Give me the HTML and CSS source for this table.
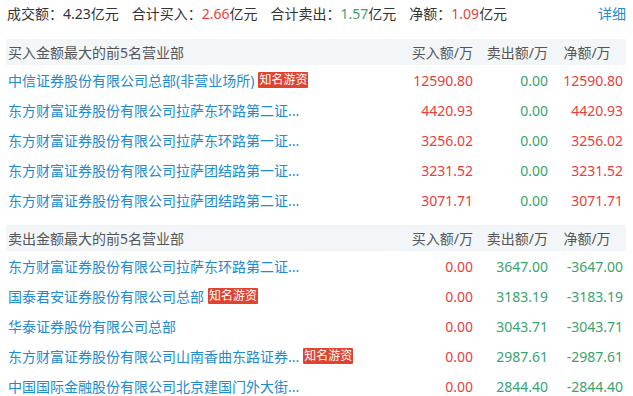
FILE: index.html
```html
<!DOCTYPE html>
<html lang="zh-CN">
<head>
<meta charset="utf-8">
<link rel="stylesheet" href="styles.css">
</head>
<body>
<div class="wrap">
  <div class="summary">
    <div class="items">
      <span class="item">成交额：<span class="plain">4.23</span>亿元</span>
      <span class="item">合计买入：<span class="up">2.66</span>亿元</span>
      <span class="item">合计卖出：<span class="down">1.57</span>亿元</span>
      <span class="item">净额：<span class="up">1.09</span>亿元</span>
    </div>
    <a class="more">详细</a>
  </div>

  <div class="table">
    <div class="row head">
      <div class="name">买入金额最大的前5名营业部</div>
      <div class="num">买入额/万</div>
      <div class="num">卖出额/万</div>
      <div class="num net">净额/万</div>
    </div>
    <div class="row">
      <div class="name"><span class="link">中信证券股份有限公司总部(非营业场所)</span><span class="tag">知名游资</span></div>
      <div class="num up">12590.80</div>
      <div class="num down">0.00</div>
      <div class="num up">12590.80</div>
    </div>
    <div class="row">
      <div class="name"><span class="link">东方财富证券股份有限公司拉萨东环路第二证...</span></div>
      <div class="num up">4420.93</div>
      <div class="num down">0.00</div>
      <div class="num up">4420.93</div>
    </div>
    <div class="row">
      <div class="name"><span class="link">东方财富证券股份有限公司拉萨东环路第一证...</span></div>
      <div class="num up">3256.02</div>
      <div class="num down">0.00</div>
      <div class="num up">3256.02</div>
    </div>
    <div class="row">
      <div class="name"><span class="link">东方财富证券股份有限公司拉萨团结路第一证...</span></div>
      <div class="num up">3231.52</div>
      <div class="num down">0.00</div>
      <div class="num up">3231.52</div>
    </div>
    <div class="row">
      <div class="name"><span class="link">东方财富证券股份有限公司拉萨团结路第二证...</span></div>
      <div class="num up">3071.71</div>
      <div class="num down">0.00</div>
      <div class="num up">3071.71</div>
    </div>
  </div>

  <div class="table second">
    <div class="row head">
      <div class="name">卖出金额最大的前5名营业部</div>
      <div class="num">买入额/万</div>
      <div class="num">卖出额/万</div>
      <div class="num net">净额/万</div>
    </div>
    <div class="row">
      <div class="name"><span class="link">东方财富证券股份有限公司拉萨东环路第二证...</span></div>
      <div class="num up">0.00</div>
      <div class="num down">3647.00</div>
      <div class="num down">-3647.00</div>
    </div>
    <div class="row">
      <div class="name"><span class="link">国泰君安证券股份有限公司总部</span><span class="tag">知名游资</span></div>
      <div class="num up">0.00</div>
      <div class="num down">3183.19</div>
      <div class="num down">-3183.19</div>
    </div>
    <div class="row">
      <div class="name"><span class="link">华泰证券股份有限公司总部</span></div>
      <div class="num up">0.00</div>
      <div class="num down">3043.71</div>
      <div class="num down">-3043.71</div>
    </div>
    <div class="row">
      <div class="name"><span class="link">东方财富证券股份有限公司山南香曲东路证券...</span><span class="tag">知名游资</span></div>
      <div class="num up">0.00</div>
      <div class="num down">2987.61</div>
      <div class="num down">-2987.61</div>
    </div>
    <div class="row">
      <div class="name"><span class="link">中国国际金融股份有限公司北京建国门外大街...</span></div>
      <div class="num up">0.00</div>
      <div class="num down">2844.40</div>
      <div class="num down">-2844.40</div>
    </div>
  </div>
</div>
</body>
</html>
```

FILE: styles.css
```css
* { box-sizing: border-box; }
html, body { margin: 0; padding: 0; background: #fff; }
body {
  font-family: "Noto Sans", "Noto Sans CJK SC", sans-serif;
  font-size: 14px;
  color: #333;
}
.wrap {
  width: 633px;
  padding: 0 7px 0 6px;
  overflow: hidden;
}
.summary {
  display: flex;
  justify-content: space-between;
  align-items: center;
  height: 28px;
  line-height: 28px;
  padding-left: 1px;
  margin-bottom: 11px;
}
.items { display: flex; gap: 13px; white-space: nowrap; }
.more { color: #208bd0; cursor: pointer; }
.up { color: #ea3d3d; }
.down { color: #3aa36f; }
.plain { color: #333; }

.table { display: flex; flex-direction: column; }
.table.second { margin-top: 10px; }
.row {
  display: grid;
  grid-template-columns: 1fr 80px 75px 78px;
  height: 30px;
  align-items: center;
  white-space: nowrap;
}
.row.head {
  height: 26px;
  background: #f3f6f9;
  color: #555;
}
.name {
  padding-left: 2px;
  display: flex;
  align-items: center;
  overflow: hidden;
}
.num { text-align: right; }
.row .num:last-child { padding-right: 3px; }
.row.head .num.net { text-align: center; padding-right: 0; }
.link { color: #208bd0; cursor: pointer; }
.tag {
  display: inline-block;
  margin-left: 4px;
  background: #e0432f;
  color: #fff;
  font-size: 12px;
  line-height: 16px;
  height: 16px;
  padding: 0 1px;
  border-radius: 1px;
}
```
